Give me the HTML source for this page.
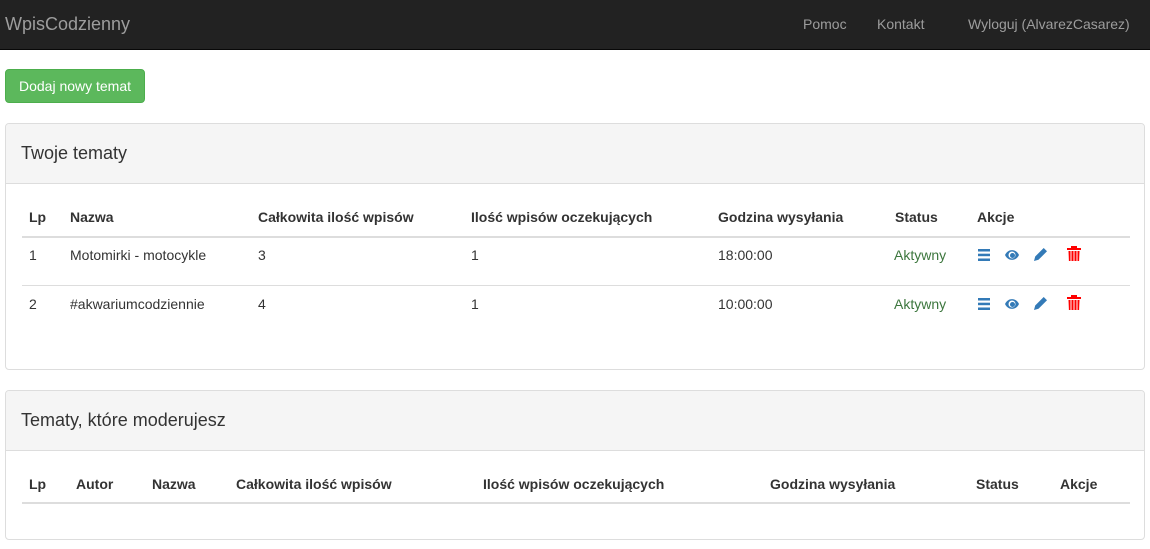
<!DOCTYPE html>
<html><head><meta charset="utf-8"><style>
*{box-sizing:border-box}
body{margin:0;width:1150px;height:549px;font-family:"Liberation Sans",Arial,sans-serif;font-size:14px;color:#333;background:#fff;position:relative;overflow:hidden}
.nav{position:absolute;left:0;top:0;width:1150px;height:50px;background:#222;border-bottom:1px solid #080808}
.nav span{position:absolute;color:#9d9d9d;top:16px}
.brand{font-size:18px;left:5px!important;top:14px!important}
.btn{position:absolute;left:5px;top:69px;width:140px;height:34px;background:#5cb85c;border:1px solid #4cae4c;border-radius:4px;color:#fff;text-align:center;line-height:32px}
.panel{position:absolute;left:5px;width:1140px;border:1px solid #ddd;border-radius:4px;background:#fff}
.ph{height:60px;background:#f5f5f5;border-bottom:1px solid #ddd;font-size:18px;padding:19px 15px;border-radius:3px 3px 0 0}
.t{position:absolute;white-space:nowrap}
.b{font-weight:bold}
.line{position:absolute;left:16px;width:1108px;background:#ddd}
.g{color:#3c763d}
svg{position:absolute}
</style></head><body>
<div class="nav"><span class="brand">WpisCodzienny</span><span style="left:803px">Pomoc</span><span style="left:877px">Kontakt</span><span style="left:968px">Wyloguj (AlvarezCasarez)</span></div>
<div class="btn">Dodaj nowy temat</div>

<div class="panel" style="top:123px;height:247px"><div class="ph">Twoje tematy</div>
<div class="t b" style="left:23px;top:85px">Lp</div><div class="t b" style="left:64px;top:85px">Nazwa</div><div class="t b" style="left:252px;top:85px">Całkowita ilość wpisów</div><div class="t b" style="left:465px;top:85px">Ilość wpisów oczekujących</div><div class="t b" style="left:712px;top:85px">Godzina wysyłania</div><div class="t b" style="left:889px;top:85px">Status</div><div class="t b" style="left:971px;top:85px">Akcje</div>
<div class="line" style="top:112px;height:2px"></div>
<div class="t" style="left:23px;top:123px">1</div><div class="t" style="left:64px;top:123px">Motomirki - motocykle</div><div class="t" style="left:252px;top:123px">3</div><div class="t" style="left:465px;top:123px">1</div><div class="t" style="left:712px;top:123px">18:00:00</div><div class="t g" style="left:888px;top:123px">Aktywny</div>
<div class="line" style="top:161px;height:1px"></div>
<div class="t" style="left:23px;top:172px">2</div><div class="t" style="left:64px;top:172px">#akwariumcodziennie</div><div class="t" style="left:252px;top:172px">4</div><div class="t" style="left:465px;top:172px">1</div><div class="t" style="left:712px;top:172px">10:00:00</div><div class="t g" style="left:888px;top:172px">Aktywny</div>
</div>

<div class="panel" style="top:390px;height:150px"><div class="ph">Tematy, które moderujesz</div>
<div class="t b" style="left:23px;top:85px">Lp</div><div class="t b" style="left:70px;top:85px">Autor</div><div class="t b" style="left:146px;top:85px">Nazwa</div><div class="t b" style="left:230px;top:85px">Całkowita ilość wpisów</div><div class="t b" style="left:477px;top:85px">Ilość wpisów oczekujących</div><div class="t b" style="left:764px;top:85px">Godzina wysyłania</div><div class="t b" style="left:970px;top:85px">Status</div><div class="t b" style="left:1054px;top:85px">Akcje</div>
<div class="line" style="top:111px;height:2px"></div>
</div>

<svg width="130" height="80" style="left:970px;top:240px" viewBox="0 0 130 80">
<g id="ic">
<rect x="8" y="9" width="12" height="2.5" fill="#337ab7"/><rect x="8" y="13.7" width="12" height="2.5" fill="#337ab7"/><rect x="8" y="18.5" width="12" height="2.5" fill="#337ab7"/>
<path d="M35 15c3-6.5 11-6.5 14 0c-3 6.5-11 6.5-14 0z" fill="#337ab7"/><circle cx="42" cy="15" r="3.5" fill="#fff"/><circle cx="42.5" cy="15.5" r="2.5" fill="#337ab7"/>
<path d="M64 21l1.2-4.5 8.5-8.5 3.3 3.3-8.5 8.5z" fill="#337ab7"/>
<rect x="97" y="8" width="14" height="2" fill="#f00"/><rect x="101" y="6" width="6" height="2" fill="#f00"/><path d="M98 11h12l-1 10h-10z" fill="#f88"/><path d="M99.5 11v10M102.5 11v10M105.5 11v10M108.5 11v10" stroke="#f00" stroke-width="1.2"/>
</g>
<use href="#ic" y="49"/>
</svg>
</body></html>
